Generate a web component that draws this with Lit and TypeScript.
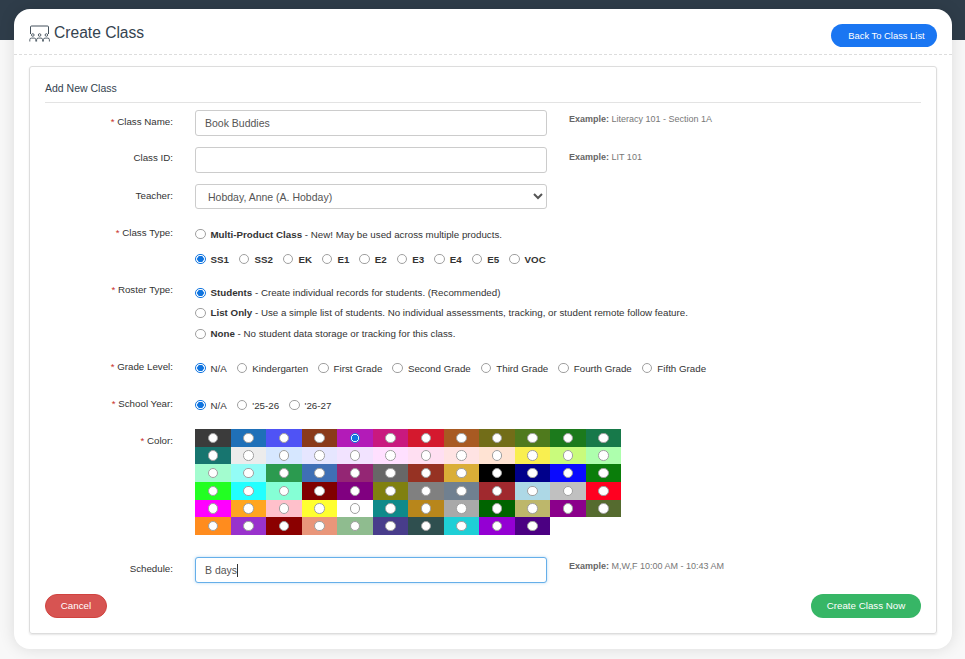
import { LitElement, html, css, svg } from "lit";
import { customElement } from "lit/decorators.js";

const COLORS = [
  "#3b3b3b", "#1f70b8", "#4f53f5", "#8a3a1a", "#b31bb8", "#c9197f", "#d4192e", "#a85a22", "#726d18", "#4f7a1d", "#1c7a1c", "#17794a",
  "#17756f", "#ececec", "#d6e7ff", "#e6e6ff", "#f2e3ff", "#ffe0ff", "#ffdff2", "#ffe3e3", "#ffe3d3", "#f9ef50", "#c9fb7c", "#adffad",
  "#a3fccf", "#93fcf6", "#2b9a4f", "#3f6fb5", "#942674", "#676767", "#963223", "#daae37", "#000000", "#00008b", "#0a0aff", "#0a7d0a",
  "#22ff22", "#22ffff", "#85ffd5", "#800000", "#800080", "#808010", "#808080", "#708090", "#a0292e", "#add8e6", "#c0c0c0", "#ff0020",
  "#ff00ff", "#ffa520", "#ffc0cb", "#ffff30", "#ffffff", "#0f8a8a", "#b8861b", "#a9a9a9", "#006400", "#bdb76b", "#8b008b", "#556b2f",
  "#ff8c1e", "#9932cc", "#8b0000", "#e9967a", "#8fbc8f", "#483d8b", "#2f4f4f", "#1fcfd6", "#9400d3", "#4b0082",
];

const PRODUCTS = ["SS1", "SS2", "EK", "E1", "E2", "E3", "E4", "E5", "VOC"];
const GRADES = ["N/A", "Kindergarten", "First Grade", "Second Grade", "Third Grade", "Fourth Grade", "Fifth Grade"];
const YEARS = ["N/A", "'25-26", "'26-27"];

const classIcon = svg`<path d="M1.5 9V2a1 1 0 0 1 1-1h16a1 1 0 0 1 1 1v7" fill="none" stroke="#2f3d4a" stroke-width=".9"/>
  ${[3.8, 10.6, 17.4].map(
    (x) => svg`<circle cx=${x} cy="10" r="1.3" fill="none" stroke="#2f3d4a" stroke-width=".8"/>
      <path d="M${x - 3} 16.5v-1.8a1.6 1.6 0 0 1 1.6-1.6h2.8a1.6 1.6 0 0 1 1.6 1.6v1.8" fill="none" stroke="#2f3d4a" stroke-width=".8"/>`
  )}`;

@customElement("app-root")
export class AppRoot extends LitElement {
  static styles = css`
    :host {
      display: block;
      height: 659px;
      overflow: hidden;
      background: linear-gradient(#2f3d4a 0 40px, #f8f8f8 40px);
      font-family: "Liberation Sans", Arial, sans-serif;
      font-size: 9.75px;
      color: #333;
      padding: 9px 13px 0 14px;
      box-sizing: border-box;
    }
    .page {
      height: 640px;
      box-sizing: border-box;
      background: #fff;
      border-radius: 16px;
      box-shadow: 0 0 16px rgba(0, 0, 0, 0.12);
      padding-bottom: 15px;
      display: flex;
      flex-direction: column;
    }
    .head {
      height: 46px;
      flex: none;
      box-sizing: border-box;
      border-bottom: 1px dashed #ddd;
      display: flex;
      align-items: center;
      justify-content: space-between;
      padding: 0 15px;
    }
    .title {
      display: flex;
      align-items: center;
      gap: 4px;
      margin-top: 3px;
      font-size: 15.6px;
      color: #34434f;
    }
    .title svg {
      width: 21px;
      height: 17px;
      display: block;
    }
    .btn {
      border: 0;
      border-radius: 12px;
      height: 24px;
      padding: 0;
      color: #fff;
      font: inherit;
      text-align: center;
    }
    .back {
      width: 106px;
      height: 23px;
      margin-top: 7px;
      padding-left: 5px;
      background: #1a76f2;
      font-size: 9.4px;
    }
    .cancel {
      width: 62px;
      background: #d75452;
      border: 1px solid #d0433f;
    }
    .create {
      width: 110px;
      background: #37b666;
    }
    .panel {
      margin: 11px 15px 0;
      flex: 1;
      border: 1px solid #ddd;
      border-radius: 3px;
      box-shadow: 0 1px 2px rgba(0, 0, 0, 0.1);
      padding: 0 15px;
      display: flex;
      flex-direction: column;
    }
    .legend {
      height: 36px;
      box-sizing: border-box;
      border-bottom: 1px solid #e3e3e3;
      padding-top: 15px;
      line-height: 13px;
      font-size: 10.5px;
      color: #34434f;
    }
    .row {
      display: grid;
      grid-template-columns: 128px 352px auto;
      column-gap: 22px;
      align-items: start;
    }
    .row.wide {
      grid-template-columns: 128px 1fr;
    }
    .name-row {
      margin-top: 7px;
    }
    .input-row {
      margin-top: 11px;
    }
    .type-row {
      margin-top: 15px;
    }
    .roster-row {
      margin-top: 13px;
    }
    .grade-row {
      margin-top: 15px;
    }
    .year-row {
      margin-top: 17px;
    }
    .color-row {
      margin-top: 14px;
    }
    .schedule-row {
      margin-top: 22px;
    }
    .lbl {
      text-align: right;
      line-height: 13px;
      padding-top: 5px;
    }
    .id-row .lbl {
      padding-top: 4px;
    }
    .wide .lbl {
      padding-top: 2px;
    }
    .roster-row .lbl {
      padding-top: 1px;
    }
    .color-row .lbl {
      padding-top: 5px;
    }
    .req {
      color: #c9302c;
    }
    .field {
      position: relative;
    }
    input.text,
    select {
      display: block;
      width: 100%;
      height: 26px;
      box-sizing: border-box;
      border: 1px solid #ccc;
      border-radius: 3px;
      background: #fff;
      color: #555;
      font: inherit;
      font-size: 10.5px;
      padding: 0 9px;
      outline: none;
    }
    select {
      height: 25px;
      padding: 0 8px;
    }
    input.focus {
      border-color: #66afe9;
      box-shadow: 0 0 3px rgba(102, 175, 233, 0.5);
    }
    .caret {
      position: absolute;
      left: 42px;
      top: 7px;
      width: 1px;
      height: 13px;
      background: #333;
    }
    .hint {
      color: #777;
      font-size: 9px;
      line-height: 13px;
      padding-top: 3px;
    }
    .id-row .hint {
      padding-top: 4px;
    }
    .hint b {
      color: #666;
    }
    .opts {
      display: flex;
      flex-direction: column;
    }
    .line {
      display: flex;
      align-items: center;
      height: 20px;
      white-space: nowrap;
    }
    .products {
      margin-top: 5px;
    }
    .last {
      margin-top: 1px;
    }
    .item {
      display: flex;
      align-items: center;
      margin-right: 10px;
    }
    input[type="radio"] {
      appearance: none;
      box-sizing: border-box;
      width: 10.5px;
      height: 10.5px;
      margin: 0 5px 0 0;
      flex: none;
      border: 1px solid #a0a0a0;
      border-radius: 50%;
      background: #fff;
    }
    input[type="radio"]:checked {
      border-color: #0f74e0;
      background: radial-gradient(circle, #0f74e0 0 3px, #fff 3.5px);
    }
    .roster-row input[type="radio"] {
      margin-top: 2px;
    }
    .swatches {
      display: grid;
      grid-template-columns: repeat(12, 35.5px);
      grid-auto-rows: 17.67px;
    }
    .swatch {
      display: flex;
      align-items: center;
      justify-content: center;
    }
    .swatch input[type="radio"] {
      margin: 0;
    }
    .foot {
      display: flex;
      justify-content: space-between;
      margin-top: 11px;
    }
  `;

  private radio(label: string, checked = false) {
    return html`<label class="item"
      ><input type="radio" ?checked=${checked} />${label}</label
    >`;
  }

  private optLine(title: string, text: string, checked = false, last = false) {
    return html`<div class="line ${last ? "last" : ""}">
      <input type="radio" ?checked=${checked} /><span><b>${title}</b> - ${text}</span>
    </div>`;
  }

  render() {
    return html`<div class="page">
      <div class="head">
        <div class="title">
          <svg viewBox="0 0 21 17">${classIcon}</svg>
          Create Class
        </div>
        <button class="btn back">Back To Class List</button>
      </div>
      <div class="panel">
        <div class="legend">Add New Class</div>

        <div class="row name-row">
          <div class="lbl"><span class="req">*</span> Class Name:</div>
          <div class="field"><input class="text" value="Book Buddies" /></div>
          <div class="hint"><b>Example:</b> Literacy 101 - Section 1A</div>
        </div>
        <div class="row input-row id-row">
          <div class="lbl">Class ID:</div>
          <div class="field"><input class="text" /></div>
          <div class="hint"><b>Example:</b> LIT 101</div>
        </div>
        <div class="row input-row">
          <div class="lbl">Teacher:</div>
          <div class="field">
            <select><option>Hobday, Anne (A. Hobday)</option></select>
          </div>
        </div>

        <div class="row wide type-row">
          <div class="lbl"><span class="req">*</span> Class Type:</div>
          <div class="opts">
            ${this.optLine("Multi-Product Class", "New! May be used across multiple products.")}
            <div class="line products">
              ${PRODUCTS.map(
                (p, i) => html`<label class="item"
                  ><input type="radio" ?checked=${i === 0} /><b>${p}</b></label
                >`
              )}
            </div>
          </div>
        </div>

        <div class="row wide roster-row">
          <div class="lbl"><span class="req">*</span> Roster Type:</div>
          <div class="opts">
            ${this.optLine("Students", "Create individual records for students. (Recommended)", true)}
            ${this.optLine("List Only", "Use a simple list of students. No individual assessments, tracking, or student remote follow feature.")}
            ${this.optLine("None", "No student data storage or tracking for this class.", false, true)}
          </div>
        </div>

        <div class="row wide grade-row">
          <div class="lbl"><span class="req">*</span> Grade Level:</div>
          <div class="line">${GRADES.map((g, i) => this.radio(g, i === 0))}</div>
        </div>

        <div class="row wide year-row">
          <div class="lbl"><span class="req">*</span> School Year:</div>
          <div class="line">${YEARS.map((y, i) => this.radio(y, i === 0))}</div>
        </div>

        <div class="row wide color-row">
          <div class="lbl"><span class="req">*</span> Color:</div>
          <div class="swatches">
            ${COLORS.map(
              (c, i) => html`<div class="swatch" style="background:${c}">
                <input type="radio" name="color" ?checked=${i === 4} />
              </div>`
            )}
          </div>
        </div>

        <div class="row schedule-row">
          <div class="lbl">Schedule:</div>
          <div class="field">
            <input class="text focus" value="B days" />
            <span class="caret"></span>
          </div>
          <div class="hint"><b>Example:</b> M,W,F 10:00 AM - 10:43 AM</div>
        </div>

        <div class="foot">
          <button class="btn cancel">Cancel</button>
          <button class="btn create">Create Class Now</button>
        </div>
      </div>
    </div>`;
  }
}
